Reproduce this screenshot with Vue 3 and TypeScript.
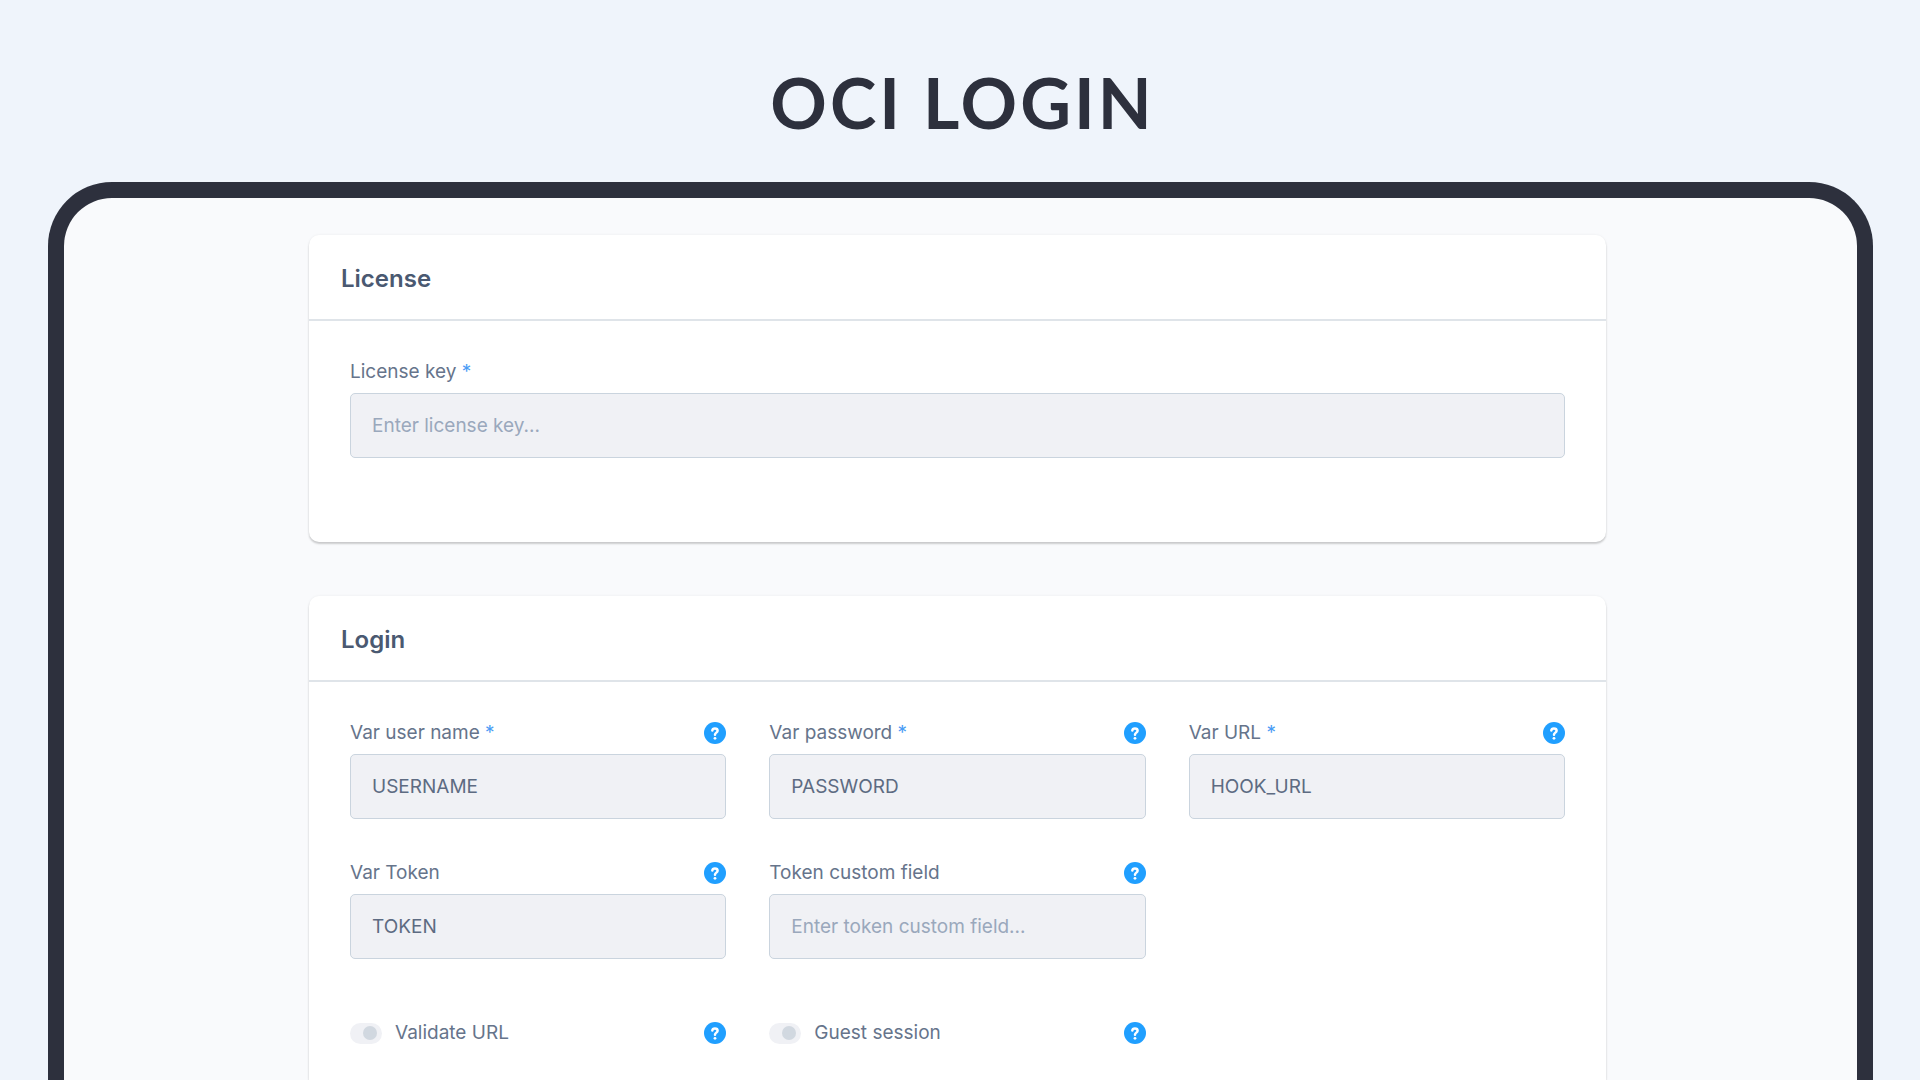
<script setup lang="ts">
import { ref } from 'vue'

interface Field {
  id: string
  label: string
  required: boolean
  placeholder: string
  value: string
}

interface Toggle {
  id: string
  label: string
  on: boolean
}

const licenseKey = ref('')

const fields = ref<Field[]>([
  { id: 'var-user', label: 'Var user name', required: true, placeholder: '', value: 'USERNAME' },
  { id: 'var-password', label: 'Var password', required: true, placeholder: '', value: 'PASSWORD' },
  { id: 'var-url', label: 'Var URL', required: true, placeholder: '', value: 'HOOK_URL' },
  { id: 'var-token', label: 'Var Token', required: false, placeholder: '', value: 'TOKEN' },
  { id: 'token-field', label: 'Token custom field', required: false, placeholder: 'Enter token custom field...', value: '' },
])

const toggles = ref<Toggle[]>([
  { id: 'validate-url', label: 'Validate URL', on: false },
  { id: 'guest-session', label: 'Guest session', on: false },
])
</script>

<template>
  <div class="page">
    <h1 class="title">OCI LOGIN</h1>
    <main class="frame">
      <section class="card">
        <h2 class="card-title">License</h2>
        <div class="card-body license-body">
          <div class="label-row">
            <label for="license-key">License key <span class="star">*</span></label>
          </div>
          <input id="license-key" v-model="licenseKey" class="text-input" type="text" placeholder="Enter license key..." />
        </div>
      </section>

      <section class="card card-last">
        <h2 class="card-title">Login</h2>
        <div class="card-body">
          <div class="grid">
            <div v-for="f in fields" :key="f.id">
              <div class="label-row">
                <label :for="f.id">{{ f.label }} <span v-if="f.required" class="star">*</span></label>
                <button class="help" type="button" :aria-label="'Help: ' + f.label">
                  <svg viewBox="0 0 22 22" width="22" height="22">
                    <circle cx="11" cy="11" r="11" fill="#209fff" />
                    <path d="M8.300 8.500C8.500 7.200 9.500 6.600 10.900 6.600c1.600 0 2.700.8 2.700 2.100 0 1.900-2.600 2-2.600 4" fill="none" stroke="#fff" stroke-width="2.500" stroke-linecap="round" />
                    <circle cx="11" cy="16.300" r="1.400" fill="#fff" />
                  </svg>
                </button>
              </div>
              <input :id="f.id" v-model="f.value" class="text-input" type="text" :placeholder="f.placeholder" />
            </div>
          </div>
          <div class="grid toggles">
            <div v-for="t in toggles" :key="t.id" class="toggle-row">
              <input :id="t.id" v-model="t.on" class="switch" type="checkbox" />
              <label :for="t.id">{{ t.label }}</label>
              <button class="help" type="button" :aria-label="'Help: ' + t.label">
                <svg viewBox="0 0 22 22" width="22" height="22">
                  <circle cx="11" cy="11" r="11" fill="#209fff" />
                  <path d="M8.300 8.500C8.500 7.200 9.500 6.600 10.900 6.600c1.600 0 2.700.8 2.700 2.100 0 1.900-2.600 2-2.600 4" fill="none" stroke="#fff" stroke-width="2.500" stroke-linecap="round" />
                  <circle cx="11" cy="16.300" r="1.400" fill="#fff" />
                </svg>
              </button>
            </div>
          </div>
        </div>
      </section>
    </main>
  </div>
</template>

<style>
body {
  background: #eff4fb;
}
</style>

<style scoped>
.page {
  box-sizing: border-box;
  display: flex;
  flex-direction: column;
  min-height: 100vh;
  padding: 60px 47px 0 48px;
  background: #eff4fb;
  font-family: Inter, "Liberation Sans", sans-serif;
  font-size: 19px;
  line-height: 24px;
  color: #66748b;
}

.title {
  margin: 0 0 38px;
  padding-left: 4px;
  text-align: center;
  font-family: Lato, sans-serif;
  font-size: 70px;
  font-weight: 700;
  line-height: 84px;
  letter-spacing: 3px;
  color: #2d303d;
}

.frame {
  flex: 1;
  display: flex;
  flex-direction: column;
  gap: 54px;
  padding: 37px 251px 0 245px;
  border: 16px solid #2d303d;
  border-bottom: 0;
  border-radius: 64px 64px 0 0;
  background: #f9fafc;
}

.card {
  border-radius: 10px;
  background: #fff;
  box-shadow: 0 2px 2px rgba(0, 0, 0, 0.18), 0 0 3px rgba(0, 0, 0, 0.06);
}

.card-last {
  flex: 1;
  border-radius: 10px 10px 0 0;
}

.card-title {
  margin: 0;
  padding: 30px 32px 26px;
  border-bottom: 2px solid #dfe4e9;
  font-size: 24px;
  font-weight: 600;
  line-height: 28px;
  color: #4a5971;
}

.card-body {
  padding: 37px 41px 20px;
}

.license-body {
  padding-bottom: 84px;
}

.grid {
  display: grid;
  grid-template-columns: repeat(3, 1fr);
  gap: 40px 43px;
}

.label-row {
  display: flex;
  align-items: center;
  justify-content: space-between;
  height: 28px;
  margin-bottom: 7px;
}

.star {
  color: #4a9cf5;
}

.text-input {
  display: block;
  box-sizing: border-box;
  width: 100%;
  height: 65px;
  padding: 0 21px;
  border: 1px solid #cad4de;
  border-radius: 5px;
  background: #f0f1f5;
  font: inherit;
  color: #5d6b82;
  outline: none;
}

.text-input::placeholder {
  color: #9aa8bc;
  opacity: 1;
}

.help {
  display: flex;
  padding: 0;
  border: 0;
  background: none;
  cursor: pointer;
}

.toggles {
  margin-top: 60px;
}

.toggle-row {
  display: flex;
  align-items: center;
  height: 28px;
}

.toggle-row .help {
  margin-left: auto;
}

.switch {
  appearance: none;
  display: flex;
  align-items: center;
  justify-content: flex-end;
  box-sizing: border-box;
  width: 32px;
  height: 21px;
  margin: 0 13px 0 0;
  padding: 0 5px;
  border-radius: 11px;
  background: #f0f1f5;
}

.switch::before {
  content: "";
  width: 14px;
  height: 14px;
  border-radius: 50%;
  background: #d1d8e0;
}

.switch:checked {
  background: #209fff;
}
</style>
